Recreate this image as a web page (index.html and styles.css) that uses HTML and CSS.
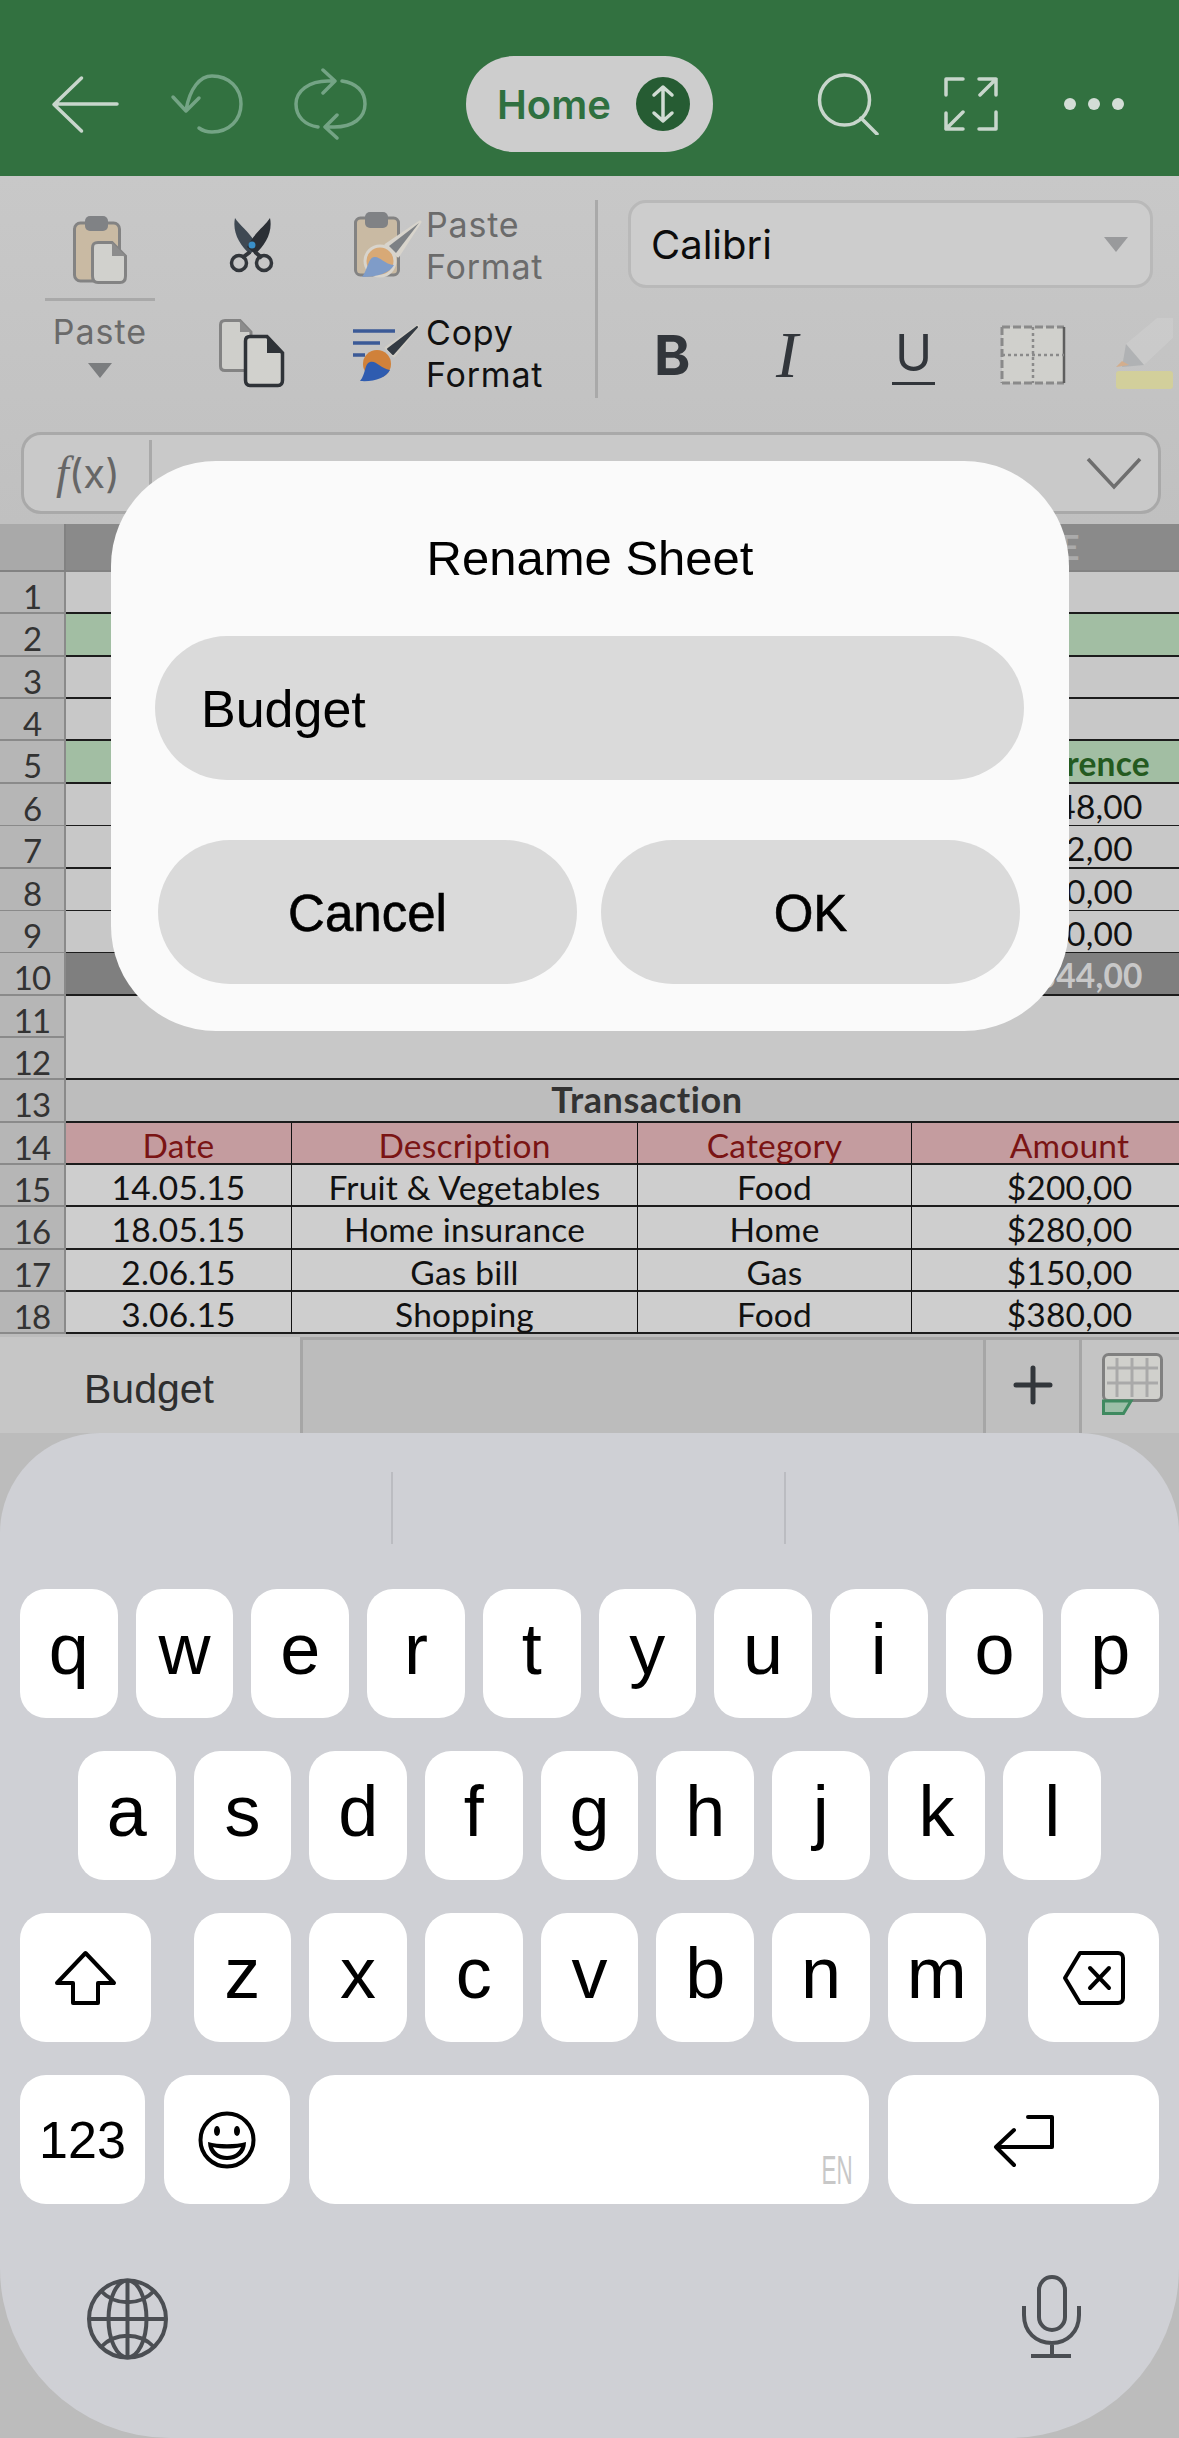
FILE: index.html
```html
<!DOCTYPE html>
<html lang="en">

<head>
    <meta charset="UTF-8">
    <meta name="viewport" content="width=device-width, initial-scale=1.0">
    <title>Rename Sheet</title>
    <link rel="stylesheet" href="styles.css">
</head>

<body>
    <div class="topbar">
        <svg class="ico-back" width="70" height="60" viewBox="50 75 70 60"><path d="M117 105H55M81.500 79 54 105.500 81.500 132"/></svg>
        <svg class="ico-undo" width="76" height="64" viewBox="170 72 76 64"><path d="M186 110C190 88 200 76 212 76 229 76 241 88 241 104 241 120 229 132 212 132 207 132 203 131 199 128M173 97 186 111 199 98"/></svg>
        <svg class="ico-redo" width="76" height="72" viewBox="292 68 76 72"><path d="M334 81H328C309 81 296 91 296 104 296 117 305 125 318 127M323 70 335 81 323 93M326 127H334C353 127 365 118 365 104 365 91 356 83 342 81M337 115 325 127 337 138"/></svg>
        <div class="pill">
            <span class="pill-text">Home</span>
            <span class="pill-btn">
                <svg width="30" height="40" viewBox="0 0 30 40"><path d="M15 3V37M6 11 15 3 24 11M6 29 15 37 24 29"/></svg>
            </span>
        </div>
        <svg class="ico-search" width="62" height="62" viewBox="818 72 62 62"><circle cx="845.500" cy="99" r="25"/><path d="M862 117 878 133"/></svg>
        <svg class="ico-expand" width="54" height="54" viewBox="945 77 54 54"><path d="M947 95V79H964M980 79H997V95M997 79 981 95M947 113V129H964M947 129 964 112M980 129H997V112"/></svg>
        <svg class="ico-dots" width="64" height="16" viewBox="1063 96 64 16"><circle cx="1071" cy="104" r="6"/><circle cx="1095" cy="104" r="6"/><circle cx="1119" cy="104" r="6"/></svg>
    </div>

    <div class="ribbon">
        <div class="ribbon-top">
            <div class="paste-col">
                <svg width="60" height="72" viewBox="70 214 60 72">
                    <rect x="74.500" y="223" width="45" height="58" rx="6" fill="#c9baa3" stroke="#838383" stroke-width="3"/>
                    <rect x="85" y="216" width="23" height="15" rx="5" fill="#808285"/>
                    <path d="M98 242.500H112L125.500 256V276C125.500 280 123.500 282.500 120 282.500H98C94 282.500 92.500 280 92.500 276V248C92.500 244 94 242.500 98 242.500Z" fill="#d1d1cd" stroke="#838383" stroke-width="3"/>
                    <path d="M112 242.500 125.500 256H112Z" fill="#8c8c8c"/>
                </svg>
                <div class="paste-line"></div>
                <div class="paste-label">Paste</div>
                <div class="paste-arrow"></div>
            </div>
            <div class="clip-col">
                <svg class="ico-cut" width="48" height="60" viewBox="228 215 48 60">
                    <path d="M235 218C240 226 250 232 258 247L250 254C240 246 232 232 235 218Z" fill="#3f4953"/>
                    <path d="M270 218C265 226 255 232 247 247L255 254C265 246 273 232 270 218Z" fill="#2b2f35"/>
                    <path d="M250 252 242 258M255 252 262 258" stroke="#32363b" stroke-width="4"/>
                    <circle cx="239" cy="263" r="7.500" fill="none" stroke="#32363b" stroke-width="3.500"/>
                    <circle cx="264" cy="263" r="7.500" fill="none" stroke="#32363b" stroke-width="3.500"/>
                    <circle cx="252" cy="245" r="3.500" fill="#3a8fc8"/>
                </svg>
                <svg class="ico-copy" width="72" height="72" viewBox="216 315 72 72">
                    <path d="M225 318.500H240L251 330V368.500H225C222 368.500 220.500 367 220.500 364V323C220.500 320 222 318.500 225 318.500Z" fill="#cfcfcb" stroke="#838383" stroke-width="3"/>
                    <path d="M240 318.500 251 330H240Z" fill="#8c8c8c"/>
                    <path d="M250 334.500H267L282.500 351V378C282.500 382 281 383.500 278 383.500H250C247 383.500 245.500 382 245.500 378V339C245.500 336 247 334.500 250 334.500Z" fill="#d1d1cd" stroke="#2f3338" stroke-width="3.500"/>
                    <path d="M267 334.500 282.500 351H267Z" fill="#2f3338"/>
                </svg>
            </div>
            <div class="format-col">
                <div class="format-row">
                    <svg width="70" height="72" viewBox="350 211 70 72">
                        <rect x="353.500" y="219" width="43" height="57" rx="5" fill="#c9baa3" stroke="#838383" stroke-width="3"/>
                        <rect x="363" y="213" width="23" height="16" rx="5" fill="#808285"/>
                        <path d="M418 223 384 246 396 257Z" fill="#d8d4cc" stroke="#d8d4cc" stroke-width="3" stroke-linejoin="round"/>
                        <path d="M417 224 387 247 394 254Z" fill="#7d8185"/>
                        <circle cx="378" cy="262" r="15" fill="#d8a976" stroke="#d8d4cc" stroke-width="3"/>
                        <path d="M360 278C366 270 366 259 372 258 378 257 382 265 392 266 388 274 376 278 360 278Z" fill="#7f9cc8"/>
                    </svg>
                    <div class="format-text dim">Paste<br>Format</div>
                </div>
                <div class="format-row">
                    <svg width="70" height="62" viewBox="350 325 70 62">
                        <path d="M351 333H393M351 345H378M351 357H363" stroke="#3b5a97" stroke-width="3.500"/>
                        <path d="M416 328 384 350 392 358Z" fill="#d0cdc6" stroke="#d0cdc6" stroke-width="3" stroke-linejoin="round"/>
                        <path d="M415 329 386 351 391 356Z" fill="#333a42" stroke="#333a42" stroke-width="2" stroke-linejoin="round"/>
                        <circle cx="375" cy="366" r="14" fill="#d0813a"/>
                        <path d="M358 383C364 376 362 366 368 364 374 362 378 370 388 372 384 380 372 384 358 383Z" fill="#2f5cb0"/>
                    </svg>
                    <div class="format-text">Copy<br>Format</div>
                </div>
            </div>
            <div class="ribbon-divider"></div>
            <div class="font-col">
                <div class="font-select">
                    <span>Calibri</span>
                    <i class="font-arrow"></i>
                </div>
                <div class="font-tools">
                    <span class="tool-b">B</span>
                    <span class="tool-i">I</span>
                    <span class="tool-u">U</span>
                    <svg class="ico-border" width="66" height="60" viewBox="1000 321 66 60">
                        <rect x="1002" y="323" width="62" height="56" fill="#d0d0cc"/>
                        <path d="M1002 323H1064M1002 379H1064M1002 323V379" fill="none" stroke="#8a8a8a" stroke-width="3" stroke-dasharray="8 3"/>
                        <path d="M1064 323V379" fill="none" stroke="#5e5e5e" stroke-width="2.500"/>
                        <path d="M1033 323V379M1002 351H1064" fill="none" stroke="#8a8a8a" stroke-width="2.500" stroke-dasharray="3 3"/>
                    </svg>
                    <svg class="ico-marker" width="57" height="74" viewBox="1122 316 57 74">
                        <path d="M1132 342 1163 316 1185 316 1185 330 1150 363Z" fill="#cdcdcd"/>
                        <path d="M1132 342 1150 363 1128 365Z" fill="#aaadaf"/>
                        <path d="M1128 359 1135 363 1122 365Z" fill="#d8a77c"/>
                        <rect x="1122" y="369" width="57" height="18" rx="3" fill="#d8d38e"/>
                    </svg>
                </div>
            </div>
        </div>
        <div class="formula">
            <div class="fx"><i>f</i>(x)</div>
            <svg class="ico-chevron" width="56" height="34" viewBox="1089 456 56 34"><path d="M1091 459 1117 487 1143 459"/></svg>
        </div>
    </div>

    <div class="sheet">
        <div class="sheet-head">
            <div class="corner"></div>
            <div class="head-cols"><span>E</span></div>
        </div>
        <div class="row"><div class="num">1</div><div class="wide line"></div></div>
        <div class="row"><div class="num">2</div><div class="wide line green"></div></div>
        <div class="row"><div class="num">3</div><div class="wide line"></div></div>
        <div class="row"><div class="num">4</div><div class="wide line"></div></div>
        <div class="row"><div class="num">5</div><div class="wide line green"><span class="col-e head-green">Difference</span></div></div>
        <div class="row"><div class="num">6</div><div class="wide line"><span class="col-e">$1148,00</span></div></div>
        <div class="row"><div class="num">7</div><div class="wide line"><span class="col-e">$102,00</span></div></div>
        <div class="row"><div class="num">8</div><div class="wide line"><span class="col-e">$100,00</span></div></div>
        <div class="row"><div class="num">9</div><div class="wide line"><span class="col-e">$100,00</span></div></div>
        <div class="row"><div class="num">10</div><div class="wide line dark"><span class="col-e total">$1344,00</span></div></div>
        <div class="row"><div class="num">11</div><div class="wide"></div></div>
        <div class="row"><div class="num">12</div><div class="wide line"></div></div>
        <div class="row"><div class="num">13</div><div class="wide line title">Transaction</div></div>
        <div class="row pink"><div class="num">14</div><div class="cell">Date</div><div class="cell">Description</div><div class="cell">Category</div><div class="cell">Amount</div></div>
        <div class="row"><div class="num">15</div><div class="cell">14.05.15</div><div class="cell">Fruit &amp; Vegetables</div><div class="cell">Food</div><div class="cell">$200,00</div></div>
        <div class="row"><div class="num">16</div><div class="cell">18.05.15</div><div class="cell">Home insurance</div><div class="cell">Home</div><div class="cell">$280,00</div></div>
        <div class="row"><div class="num">17</div><div class="cell">2.06.15</div><div class="cell">Gas bill</div><div class="cell">Gas</div><div class="cell">$150,00</div></div>
        <div class="row"><div class="num">18</div><div class="cell">3.06.15</div><div class="cell">Shopping</div><div class="cell">Food</div><div class="cell">$380,00</div></div>
    </div>

    <div class="tabs">
        <div class="tab">Budget</div>
        <div class="tab-empty"></div>
        <div class="tab-add">
            <svg width="40" height="40" viewBox="0 0 40 40"><path d="M20 3V37M3 20H37"/></svg>
        </div>
        <div class="tab-view">
            <svg width="66" height="66" viewBox="1100 1351 66 66">
                <rect x="1103.500" y="1354.500" width="58" height="46" rx="5" fill="#d0d0cc" stroke="#808080" stroke-width="3"/>
                <path d="M1107 1368H1158M1107 1383H1158M1117 1358V1397M1132 1358V1397M1147 1358V1397" stroke="#a9a9a9" stroke-width="3"/>
                <path d="M1103.500 1401H1131L1123.500 1413.500H1103.500Z" fill="#9cbfa8" stroke="#3f8a60" stroke-width="3"/>
            </svg>
        </div>
    </div>

    <div class="keyboard">
        <div class="suggest"><i></i><i></i></div>
        <div class="kb-row kb-top">
            <div class="key">q</div><div class="key">w</div><div class="key">e</div><div class="key">r</div><div class="key">t</div>
            <div class="key">y</div><div class="key">u</div><div class="key">i</div><div class="key">o</div><div class="key">p</div>
        </div>
        <div class="kb-row kb-mid">
            <div class="key">a</div><div class="key">s</div><div class="key">d</div><div class="key">f</div><div class="key">g</div>
            <div class="key">h</div><div class="key">j</div><div class="key">k</div><div class="key">l</div>
        </div>
        <div class="kb-row kb-low">
            <div class="key key-side">
                <svg width="64" height="58" viewBox="56 1950 64 58"><path d="M87.500 1954 116 1984H100V2004H75V1984H59Z"/></svg>
            </div>
            <div class="kb-letters">
                <div class="key">z</div><div class="key">x</div><div class="key">c</div><div class="key">v</div>
                <div class="key">b</div><div class="key">n</div><div class="key">m</div>
            </div>
            <div class="key key-side">
                <svg width="64" height="58" viewBox="1060 1950 64 58"><path d="M1078 1954H1116C1119 1954 1121 1956 1121 1959V1999C1121 2002 1119 2004 1116 2004H1078L1063 1979ZM1088 1969 1107 1989M1107 1969 1088 1989"/></svg>
            </div>
        </div>
        <div class="kb-row kb-last">
            <div class="key key-123">123</div>
            <div class="key key-emoji">
                <svg width="60" height="60" viewBox="197 2108 60 60">
                    <circle cx="227" cy="2138" r="26.500" fill="none" stroke="#000" stroke-width="4"/>
                    <ellipse cx="217" cy="2129" rx="3" ry="5"/>
                    <ellipse cx="237" cy="2129" rx="3" ry="5"/>
                    <path d="M208 2140C218 2143 236 2143 246 2140 246 2152 237 2158 227 2158 217 2158 208 2152 208 2140Z"/>
                    <path d="M213 2145C222 2147 232 2147 241 2145 239 2150 234 2154 227 2154 220 2154 215 2150 213 2145Z" fill="#fff"/>
                </svg>
            </div>
            <div class="key key-space"><span class="lang">EN</span></div>
            <div class="key key-return">
                <svg width="66" height="56" viewBox="992 2110 66 56"><path d="M1029 2115H1053V2145H997M1015 2128 997 2145 1015 2163"/></svg>
            </div>
        </div>
        <div class="kb-bottom">
            <svg class="ico-globe" width="84" height="84" viewBox="85 2275 84 84">
                <circle cx="127.500" cy="2317" r="38.500"/>
                <ellipse cx="127.500" cy="2317" rx="19" ry="38.500"/>
                <path d="M127.500 2278.500V2355.500M89 2317H166M101 2289C115 2304 140 2304 154 2289M101 2345C115 2330 140 2330 154 2345"/>
            </svg>
            <svg class="ico-mic" width="60" height="86" viewBox="1021 2272 60 86">
                <rect x="1039" y="2275" width="26" height="53" rx="13"/>
                <path d="M1024 2304V2313C1024 2330 1036 2341 1052 2341 1067 2341 1079 2330 1079 2313V2304M1052 2341V2352"/>
                <path d="M1031 2354H1071" stroke-width="6"/>
            </svg>
        </div>
    </div>

    <div class="dialog">
        <div class="dialog-title">Rename Sheet</div>
        <div class="dialog-input">Budget</div>
        <div class="dialog-btns">
            <div class="dialog-btn">Cancel</div>
            <div class="dialog-btn">OK</div>
        </div>
    </div>
</body>

</html>
```

FILE: styles.css
```css
* {
    margin: 0;
    padding: 0;
    box-sizing: border-box;
}

body {
    position: relative;
    width: 1179px;
    height: 2438px;
    overflow: hidden;
    background-color: #bcbcbc;
    font-family: "Liberation Sans", sans-serif;
}

svg {
    display: block;
    flex: none;
}

/* top green bar */
.topbar {
    display: flex;
    align-items: center;
    height: 176px;
    padding: 32px 0 0 50px;
    background-color: #327140;
}

.topbar svg path,
.topbar svg circle {
    fill: none;
    stroke-width: 3.500px;
    stroke-linecap: round;
    stroke-linejoin: round;
}

.ico-back path,
.ico-search *,
.ico-expand path {
    stroke: #c8d6cc;
}

.ico-undo path,
.ico-redo path {
    stroke: #74a485;
}

.ico-undo {
    margin-left: 50px;
}

.ico-redo {
    margin-left: 46px;
}

.pill {
    display: flex;
    align-items: center;
    width: 247px;
    height: 96px;
    margin-left: 98px;
    padding-left: 31px;
    border-radius: 48px;
    background-color: #cdcdcd;
}

.pill-text {
    width: 139px;
    font-family: Inter, sans-serif;
    font-size: 40px;
    font-weight: 600;
    color: #2f7040;
}

.pill-btn {
    display: flex;
    align-items: center;
    justify-content: center;
    width: 54px;
    height: 54px;
    border-radius: 50%;
    background-color: #265c33;
}

.pill-btn svg path {
    stroke: #d0dcd3;
}

.ico-search {
    margin-left: 104px;
}

.ico-expand {
    margin-left: 65px;
}

.ico-dots {
    margin-left: 64px;
}

.topbar .ico-dots circle {
    fill: #d3ddd6;
    stroke: none;
}

/* ribbon */
.ribbon {
    height: 348px;
    padding-top: 24px;
    background: linear-gradient(#c8c8c8, #c0c0c0);
    font-family: Inter, sans-serif;
}

.ribbon-top {
    display: flex;
    align-items: flex-start;
    height: 232px;
}

.paste-col {
    display: flex;
    flex-direction: column;
    align-items: center;
    width: 110px;
    margin-left: 45px;
    padding-top: 14px;
}

.paste-line {
    width: 110px;
    height: 3px;
    margin-top: 12px;
    background-color: #a9a9a9;
}

.paste-label {
    margin-top: 11px;
    font-size: 34px;
    line-height: 40px;
    letter-spacing: 1px;
    color: #6a6a6a;
}

.paste-arrow {
    width: 0;
    height: 0;
    margin-top: 11px;
    border-left: 12px solid transparent;
    border-right: 12px solid transparent;
    border-top: 15px solid #7b7d7f;
}

.clip-col {
    width: 72px;
    margin-left: 61px;
}

.ico-cut {
    margin: 15px 0 0 12px;
}

.ico-copy {
    margin-top: 42px;
}

.format-col {
    width: 243px;
    margin-left: 64px;
    padding-top: 4px;
}

.format-row {
    display: flex;
    align-items: center;
    height: 84px;
    margin-bottom: 24px;
}

.format-text {
    margin-left: 4px;
    font-size: 34px;
    line-height: 42px;
    letter-spacing: 0.8px;
    color: #111;
}

.format-text.dim {
    color: #6b6b6b;
}

.ribbon-divider {
    width: 3px;
    height: 198px;
    background-color: #a9a9a9;
}

.font-col {
    margin-left: 30px;
}

.font-select {
    display: flex;
    align-items: center;
    justify-content: space-between;
    width: 525px;
    height: 88px;
    padding: 0 22px 0 20px;
    border: 3px solid #b9b9b9;
    border-radius: 18px;
    background-color: #cdcdcd;
    font-size: 40px;
    color: #0c0c0c;
}

.font-arrow {
    width: 0;
    height: 0;
    border-left: 12px solid transparent;
    border-right: 12px solid transparent;
    border-top: 15px solid #999a9c;
}

.font-tools {
    display: flex;
    align-items: center;
    width: 551px;
    height: 90px;
    margin-top: 22px;
    color: #32363b;
}

.font-tools span {
    flex: none;
}

.tool-b {
    width: 60px;
    margin-left: 26px;
    font-size: 55px;
    font-weight: 700;
}

.tool-i {
    width: 40px;
    margin-left: 62px;
    font-family: "Liberation Serif", serif;
    font-style: italic;
    font-size: 66px;
}

.tool-u {
    margin-left: 76px;
    padding: 0 3px 1px;
    border-bottom: 3px solid #32363b;
    font-size: 50px;
    line-height: 56px;
}

.ico-border {
    margin-left: 65px;
}

.ico-marker {
    margin-left: 50px;
    opacity: 0.75;
}

.formula {
    display: flex;
    align-items: center;
    justify-content: space-between;
    width: 1140px;
    height: 82px;
    margin: 0 0 0 21px;
    padding-right: 16px;
    border: 3px solid #a9a9a9;
    border-radius: 20px;
    background-color: #c9c9c9;
}

.fx {
    width: 128px;
    height: 66px;
    border-right: 3px solid #a9a9a9;
    padding-left: 32px;
    font-size: 40px;
    line-height: 66px;
    color: #666;
}

.fx i {
    font-family: "Liberation Serif", serif;
    font-size: 46px;
}

.ico-chevron path {
    fill: none;
    stroke: #6e6e6e;
    stroke-width: 3.500px;
}

/* spreadsheet */
.sheet {
    height: 813px;
    overflow: hidden;
    font-family: Lato, sans-serif;
    font-size: 33.500px;
    letter-spacing: 0.2px;
    color: #111;
}

.sheet-head {
    display: flex;
    height: 48px;
    border-bottom: 2px solid #828282;
}

.corner {
    flex: none;
    width: 66px;
    border-right: 2px solid #828282;
    background-color: #a9a9a9;
}

.head-cols {
    flex: none;
    width: 1162px;
    padding-left: 846px;
    background-color: #8a8a8a;
    color: #ababab;
    font-weight: 700;
    line-height: 46px;
}

.head-cols span {
    display: block;
    width: 316px;
    text-align: center;
}

.row {
    display: grid;
    grid-template-columns: 66px 226px 346px 274px 316px;
    width: 1228px;
    height: 42.360px;
}

.num {
    padding-top: 8px;
    border-right: 2px solid #8a8a8a;
    border-bottom: 2px solid #8a8a8a;
    background-color: #b6b6b6;
    color: #333;
    font-size: 33px;
    line-height: 32px;
    letter-spacing: -1px;
    text-align: center;
}

.wide {
    position: relative;
    grid-column: span 4;
    padding-top: 3px;
    background-color: #c8c8c8;
    line-height: 38px;
}

.line {
    border-bottom: 2px solid #1c1c1c;
}

.green {
    background-color: #a2bea3;
}

.dark {
    background-color: #7f7f7f;
}

.title {
    padding-top: 0;
    background-color: #bdbdbd;
    color: #333;
    font-size: 36px;
    font-weight: 700;
    letter-spacing: 0.6px;
    line-height: 38px;
    text-align: center;
}

.col-e {
    display: block;
    width: 316px;
    margin-left: 846px;
    text-align: center;
}

.head-green {
    color: #245a1f;
    font-weight: 700;
}

.total {
    color: #c8c8c8;
    font-weight: 700;
}

.cell {
    padding-top: 4px;
    border-right: 1px solid #111;
    border-bottom: 2px solid #1c1c1c;
    background-color: #cecece;
    line-height: 36px;
    text-align: center;
}

.pink .cell {
    background-color: #c49c9f;
    color: #7a1414;
}

/* sheet tabs */
.tabs {
    display: flex;
    height: 96px;
}

.tab {
    width: 300px;
    padding: 29px 0 0 84px;
    background-color: #c6c6c6;
    font-size: 41px;
    color: #2e2e2e;
}

.tab-empty {
    width: 686px;
    border-top: 3px solid #a6a6a6;
    border-left: 3px solid #a6a6a6;
    border-right: 3px solid #a6a6a6;
    background-color: #bcbcbc;
}

.tab-add {
    display: flex;
    justify-content: center;
    width: 96px;
    padding-top: 25px;
    border-top: 3px solid #a6a6a6;
    border-right: 3px solid #a6a6a6;
    background-color: #bfbfbf;
}

.tab-add path {
    stroke: #32363b;
    stroke-width: 5px;
    stroke-linecap: round;
}

.tab-view {
    width: 97px;
    padding: 11px 0 0 18px;
    border-top: 3px solid #a6a6a6;
    background-color: #c4c4c4;
}

/* keyboard */
.keyboard {
    height: 1005px;
    padding-top: 39px;
    border-radius: 100px 100px 170px 170px;
    background-color: #cfd0d5;
}

.suggest {
    display: flex;
    gap: 391px;
    height: 72px;
    margin-bottom: 45px;
    padding-left: 391px;
}

.suggest i {
    width: 2px;
    background-color: #bbbcc1;
}

.kb-row {
    display: flex;
    gap: 18px;
    height: 129px;
    margin-bottom: 33px;
}

.kb-top {
    padding: 0 20px;
}

.kb-mid {
    padding: 0 78px;
}

.kb-low {
    justify-content: space-between;
    padding: 0 20px;
}

.kb-letters {
    display: flex;
    gap: 18px;
    width: 792px;
}

.key {
    display: flex;
    flex: 1;
    align-items: center;
    justify-content: center;
    padding-bottom: 10px;
    border-radius: 26px;
    background-color: #fff;
    font-size: 72px;
    color: #000;
}

.key-side {
    flex: none;
    width: 131px;
    padding-bottom: 0;
}

.key-side path,
.key-return path {
    fill: none;
    stroke: #000;
    stroke-width: 4px;
    stroke-linecap: round;
    stroke-linejoin: round;
}

.kb-last {
    gap: 19px;
    padding: 0 20px;
}

.key-123 {
    flex: none;
    width: 125px;
    padding-bottom: 0;
    font-size: 52px;
}

.key-emoji {
    flex: none;
    width: 126px;
    padding-bottom: 0;
}

.key-space {
    position: relative;
    flex: none;
    width: 560px;
}

.lang {
    position: absolute;
    right: 16px;
    bottom: 14px;
    transform: scaleX(0.56);
    transform-origin: right;
    font-size: 40px;
    line-height: 40px;
    color: #c8c8c8;
}

.key-return {
    flex: none;
    width: 271px;
    padding-bottom: 0;
}

.kb-bottom {
    display: flex;
    align-items: center;
    justify-content: space-between;
    height: 84px;
    margin-top: 73px;
    padding: 0 98px 0 85px;
}

.kb-bottom * {
    fill: none;
    stroke: #4b4e53;
    stroke-width: 4px;
}

.ico-mic {
    margin-bottom: 5px;
}

/* rename dialog */
.dialog {
    position: absolute;
    left: 111px;
    top: 461px;
    width: 958px;
    height: 570px;
    padding-top: 69px;
    border-radius: 105px;
    background-color: #fafafa;
    color: #000;
}

.dialog-title {
    height: 106px;
    font-size: 49px;
    line-height: 56px;
    text-align: center;
}

.dialog-input {
    width: 869px;
    height: 144px;
    margin-left: 44px;
    padding-left: 46px;
    border-radius: 72px;
    background-color: #dadada;
    font-size: 52px;
    line-height: 147px;
}

.dialog-btns {
    display: flex;
    gap: 24px;
    margin: 60px 0 0 47px;
}

.dialog-btn {
    width: 419px;
    height: 144px;
    border-radius: 72px;
    background-color: #dadada;
    font-size: 51px;
    line-height: 147px;
    text-align: center;
    -webkit-text-stroke: 0.6px #000;
}
```
